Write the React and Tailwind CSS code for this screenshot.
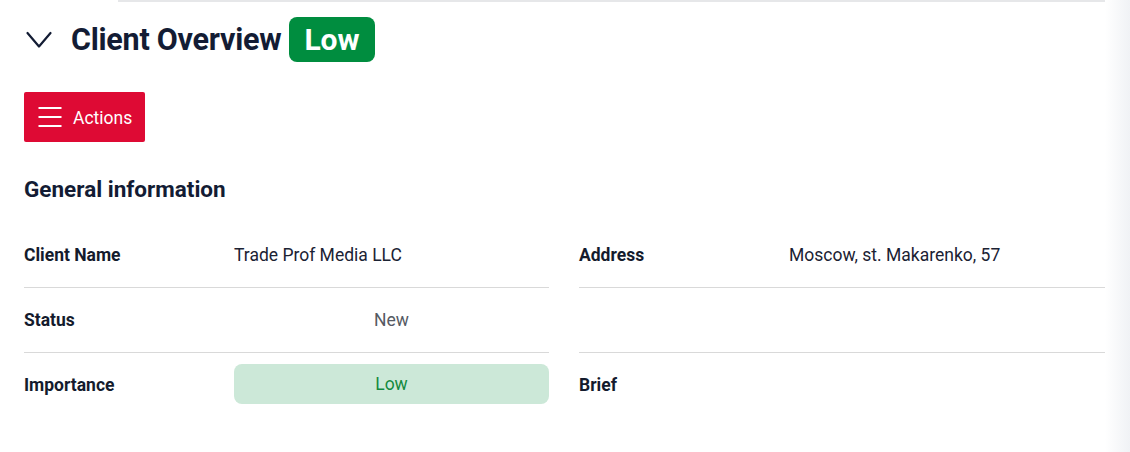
import { useState } from 'react'

const leftRows = [
  { label: 'Client Name', value: 'Trade Prof Media LLC' },
  { label: 'Status', value: 'New', center: true },
  { label: 'Importance', value: 'Low', pill: true },
]

const rightRows = [
  { label: 'Address', value: 'Moscow, st. Makarenko, 57' },
  { label: '', value: '' },
  { label: 'Brief', value: '' },
]

function Chevron({ open }) {
  return (
    <svg width="26" height="18" viewBox="0 0 26 18" fill="none" className={open ? '' : '-rotate-90'}>
      <path d="M1.5 2 L13 15.5 L24.5 2" stroke="#131c34" strokeWidth="2.2" strokeLinecap="round" strokeLinejoin="round" />
    </svg>
  )
}

function Hamburger() {
  return (
    <svg width="24" height="20" viewBox="0 0 24 20" fill="none">
      <path d="M0.5 1 H23.5 M0.5 10 H23.5 M0.5 19 H23.5" stroke="white" strokeWidth="2" />
    </svg>
  )
}

function InfoRow({ row, last }) {
  return (
    <div className={`flex h-[65px] items-center ${last ? '' : 'border-b border-[#d9d9d9]'}`}>
      <div className="w-[210px] shrink-0 text-[17.5px] font-bold text-[#141b2d]">{row.label}</div>
      {row.pill ? (
        <div className="mb-[3px] flex h-10 flex-1 items-center justify-center rounded-lg bg-[#cce8d8] text-[17.5px] text-[#148a3e]">
          {row.value}
        </div>
      ) : (
        <div className={`flex-1 text-[17.5px] ${row.center ? 'text-center text-[#555a63]' : 'text-[#1b2233]'}`}>
          {row.value}
        </div>
      )}
    </div>
  )
}

export default function App() {
  const [open, setOpen] = useState(true)

  return (
    <div className="flex h-[452px] w-[1130px] overflow-hidden bg-white font-['Roboto',sans-serif]">
      <div className="flex-1 pl-6">
        <div className="ml-[94px] h-[2px] bg-[#e6e7e9]" />

        <div className="mt-[15px] flex h-[45px] items-center">
          <button type="button" onClick={() => setOpen(!open)} className="ml-[2px] mr-[19px] flex items-center">
            <Chevron open={open} />
          </button>
          <h1 className="text-[30.5px] font-bold tracking-[-0.25px] text-[#131c34]">Client Overview</h1>
          <span className="ml-2 flex h-[45px] items-center rounded-lg bg-[#008d3f] px-[15px] text-[30px] font-bold text-white">
            Low
          </span>
        </div>

        <button
          type="button"
          className="mt-[30px] flex h-[50px] items-center gap-[11px] rounded-[2px] bg-[#de0a34] pl-[14px] pr-[13px] pt-[2px] text-[17.5px] text-white"
        >
          <span className="-mt-[2px] flex">
            <Hamburger />
          </span>
          Actions
        </button>

        {open && (
          <>
            <h2 className="mt-[33px] text-[22.5px] font-bold leading-7 text-[#131c34]">General information</h2>

            <div className="mt-[20px] grid grid-cols-[525px_1fr] gap-x-[30px]">
              <div>
                {leftRows.map((row, i) => (
                  <InfoRow key={i} row={row} last={i === leftRows.length - 1} />
                ))}
              </div>
              <div>
                {rightRows.map((row, i) => (
                  <InfoRow key={i} row={row} last={i === rightRows.length - 1} />
                ))}
              </div>
            </div>
          </>
        )}
      </div>
      <div className="w-[25px] shrink-0 bg-gradient-to-r from-white to-[#f0f2f5]" />
    </div>
  )
}
